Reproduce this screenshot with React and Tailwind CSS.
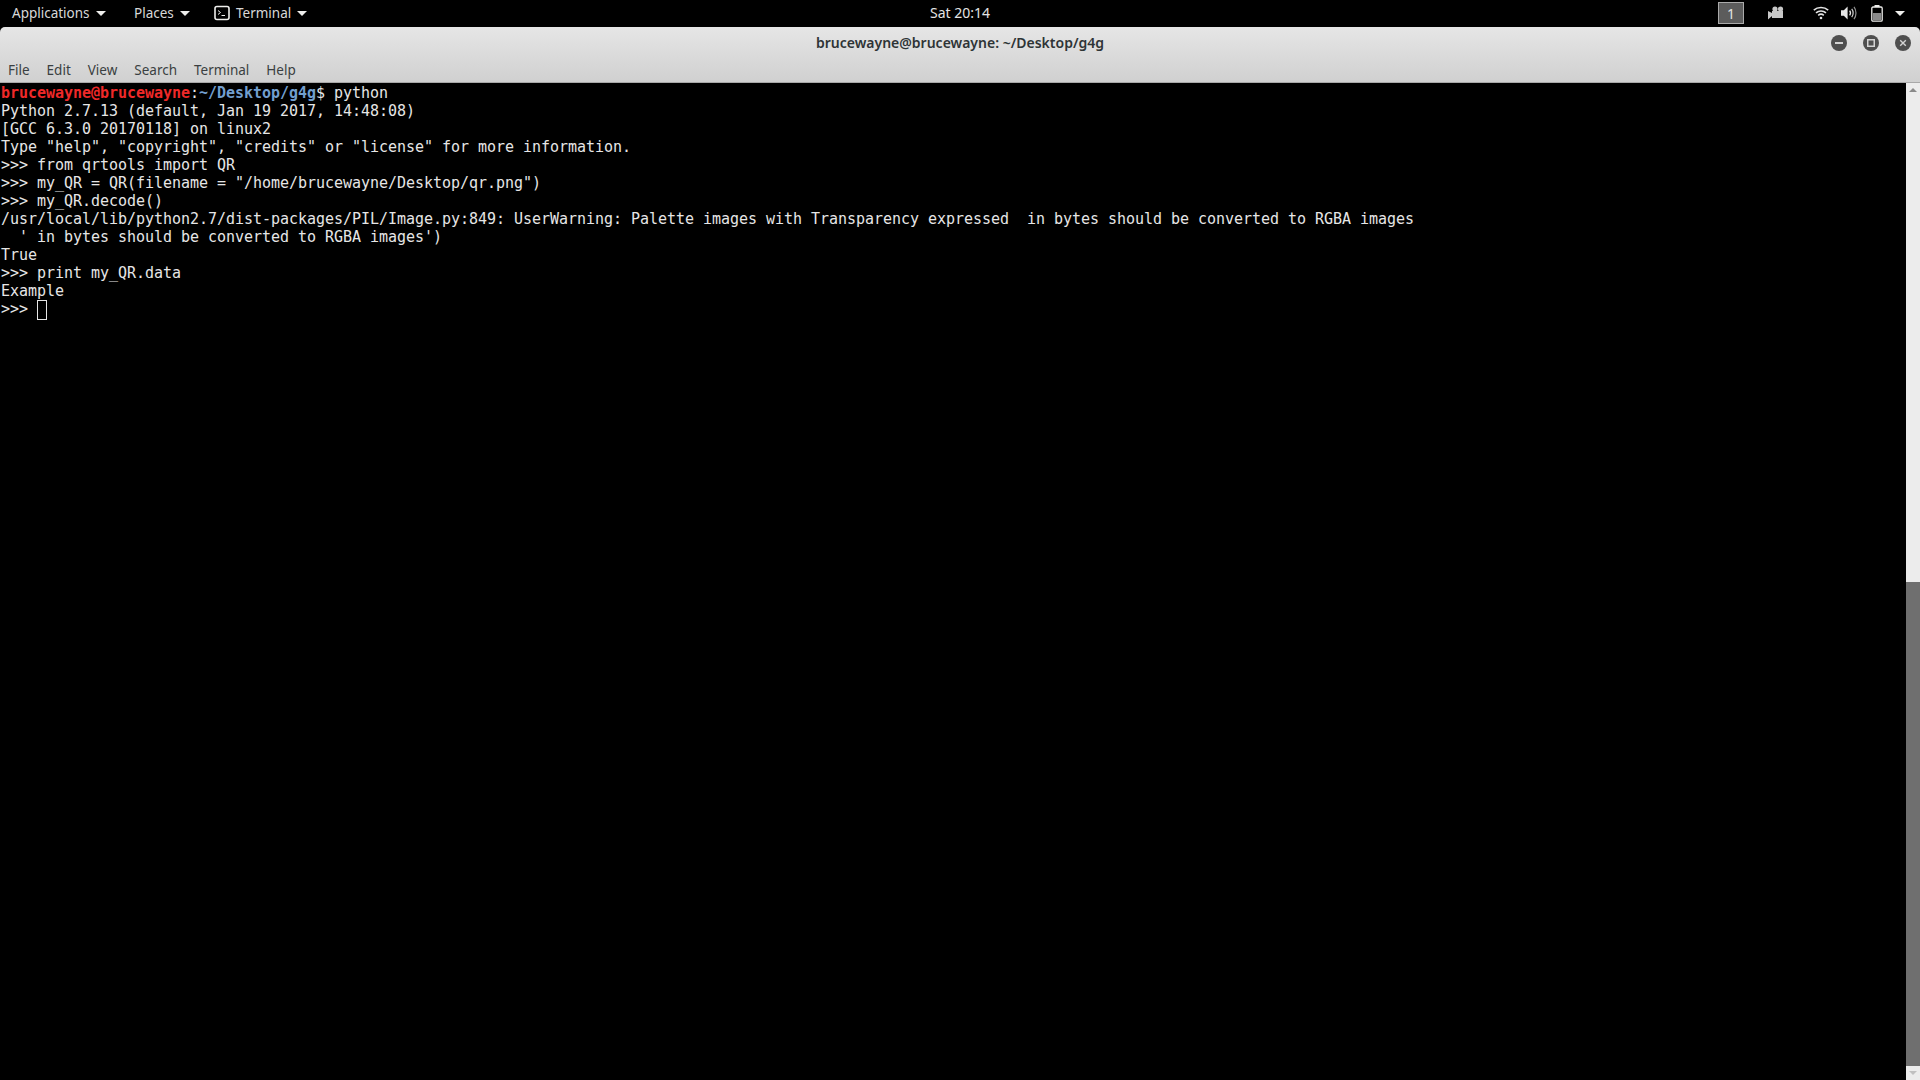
const menus = ["File", "Edit", "View", "Search", "Terminal", "Help"];

const lines = [
  "Python 2.7.13 (default, Jan 19 2017, 14:48:08)",
  "[GCC 6.3.0 20170118] on linux2",
  'Type "help", "copyright", "credits" or "license" for more information.',
  ">>> from qrtools import QR",
  '>>> my_QR = QR(filename = "/home/brucewayne/Desktop/qr.png")',
  ">>> my_QR.decode()",
  "/usr/local/lib/python2.7/dist-packages/PIL/Image.py:849: UserWarning: Palette images with Transparency expressed  in bytes should be converted to RGBA images",
  "  ' in bytes should be converted to RGBA images')",
  "True",
  ">>> print my_QR.data",
  "Example",
];

function Caret() {
  return <span className="h-0 w-0 border-x-[5px] border-t-[5px] border-x-transparent border-t-[#eeeeec]" />;
}

function TopMenu({ children, className }) {
  return (
    <div className={"flex items-center gap-[6px] text-[13.5px] text-[#d8d8d8] " + className}>
      {children}
      <Caret />
    </div>
  );
}

function WinButton({ children }) {
  return (
    <div className="flex h-4 w-4 items-center justify-center rounded-full bg-[#4f4f4f]">
      <svg width="16" height="16" viewBox="0 0 16 16" fill="none" stroke="#d4d4d4">
        {children}
      </svg>
    </div>
  );
}

export default function App() {
  return (
    <div className="flex h-[1080px] w-[1920px] flex-col overflow-hidden bg-black font-['Noto_Sans',sans-serif]">
      {/* gnome shell panel */}
      <div className="relative flex h-[27px] shrink-0 items-center bg-black pb-[1px] pl-3 pr-[15px]">
        <TopMenu className="w-[122px]">Applications</TopMenu>
        <TopMenu className="w-[80px]">Places</TopMenu>
        <TopMenu>
          <svg width="16" height="16" viewBox="0 0 16 16" fill="none">
            <rect x="1" y="1.5" width="14" height="13" rx="2" stroke="#eeeeec" strokeWidth="1.6" />
            <path d="M4 5.5 6.5 7.5 4 9.5M7.500 10.500h3.500" stroke="#eeeeec" strokeWidth="1" />
          </svg>
          <span>Terminal</span>
        </TopMenu>
        <div className="absolute left-[930px] top-0 flex h-[25px] items-center text-[14px] text-[#e4e4e4]">Sat 20:14</div>
        <div className="ml-auto flex items-center">
          <div className="flex h-[22px] w-[26px] items-center justify-center border border-[#aaaaaa] bg-[#5c5c5c] text-[14px] text-[#e4e4e4]">1</div>
          <svg className="ml-[24px]" width="16" height="14" viewBox="0 0 16 14" fill="#c8c8c8">
            <path d="M0 5 4 7V5h11v7H4v-2l-4 3.500Z" />
            <circle cx="7" cy="3" r="2.600" />
            <circle cx="12.500" cy="3" r="2.600" />
          </svg>
          <svg className="ml-[29px]" width="16" height="14" viewBox="0 0 16 14" fill="none" stroke="#e4e4e4" strokeWidth="1.6">
            <path d="M.8 4.2c4-3.6 10.4-3.6 14.4 0M3 6.8c2.800-2.400 7.200-2.400 10 0M5.200 9.300c1.600-1.300 4-1.300 5.600 0" />
            <circle cx="8" cy="12" r="1.300" fill="#e4e4e4" stroke="none" />
          </svg>
          <svg className="ml-[12px]" width="16" height="16" viewBox="0 0 17 16" fill="none">
            <path d="M0 5h3l4-4v14l-4-4H0Z" fill="#e8e8e8" />
            <path d="M9.200 5.500c1 1.400 1 3.600 0 5" stroke="#e8e8e8" strokeWidth="1.400" />
            <path d="M11.400 3.500c2 2.500 2 6.500 0 9" stroke="#d0d0d0" strokeWidth="1.300" />
            <path d="M13.800 1.500c2.800 3.600 2.800 9.400 0 13" stroke="#909090" strokeWidth="1.300" />
          </svg>
          <svg className="ml-[14px]" width="12" height="17" viewBox="0 0 12 17" fill="none">
            <path d="M3.500 0h5v2h-5Z" fill="#eeeeec" />
            <rect x=".8" y="2" width="10.400" height="14.200" rx="1.200" stroke="#eeeeec" strokeWidth="1.300" />
            <rect x="2" y="8" width="8" height="7" fill="#8a8a8a" />
          </svg>
          <span className="ml-[12px]">
            <span className="block h-0 w-0 border-x-[5px] border-t-[5px] border-x-transparent border-t-[#eeeeec]" />
          </span>
        </div>
      </div>

      {/* window chrome */}
      <div className="shrink-0 rounded-t-[5px] border-b border-[#a8a8a8] bg-gradient-to-b from-[#e6e6e6] to-[#d0d0d0]">
        <div className="relative flex h-[30px] items-center justify-center pt-[1px]">
          <span className="text-[14px] font-semibold text-[#2e3436]">brucewayne@brucewayne: ~/Desktop/g4g</span>
          <div className="absolute right-[9px] top-[8px] flex gap-4">
            <WinButton>
              <path d="M4 8h8" strokeWidth="2" />
            </WinButton>
            <WinButton>
              <rect x="4.750" y="4.750" width="6.500" height="6.500" strokeWidth="1.500" />
            </WinButton>
            <WinButton>
              <path d="M5.200 5.200l5.600 5.600M10.800 5.200l-5.600 5.600" strokeWidth="1.400" />
            </WinButton>
          </div>
        </div>
        <div className="flex h-[25px] items-center gap-[17px] pt-[2px] pl-2 text-[13.5px] text-[#3a3f41]">
          {menus.map((m) => (
            <span key={m}>{m}</span>
          ))}
        </div>
      </div>

      <div className="flex min-h-0 flex-1">
        {/* terminal output */}
        <div className="min-w-0 flex-1 pt-[1px] pl-[1px] font-['DejaVu_Sans_Mono',monospace] text-[15px] leading-[18px] tracking-[-0.03px] whitespace-pre text-[#e6e6e6]">
          <div>
            <span className="font-bold text-[#ef2929]">brucewayne@brucewayne</span>
            <span>:</span>
            <span className="font-bold text-[#729fcf]">~/Desktop/g4g</span>
            <span>$ python</span>
          </div>
          {lines.map((l, i) => (
            <div key={i}>{l}</div>
          ))}
          <div className="flex h-[18px]">
            <span>{">>> "}</span>
            <span className="h-[20px] w-[10px] border border-[#e6e6e6]" />
          </div>
        </div>

        {/* scrollbar */}
        <div className="flex w-[14px] shrink-0 flex-col bg-[#ececec]">
          <div className="flex h-[14px] shrink-0 items-center justify-center">
            <span className="h-0 w-0 border-x-[4px] border-b-[4px] border-x-transparent border-b-[#8a8a8a]" />
          </div>
          <div className="flex-1" />
          <div className="h-[484px] shrink-0 bg-[#6f6f6f]" />
          <div className="flex h-[14px] shrink-0 items-center justify-center">
            <span className="h-0 w-0 border-x-[4px] border-t-[4px] border-x-transparent border-t-[#c0c0c0]" />
          </div>
        </div>
      </div>
    </div>
  );
}
